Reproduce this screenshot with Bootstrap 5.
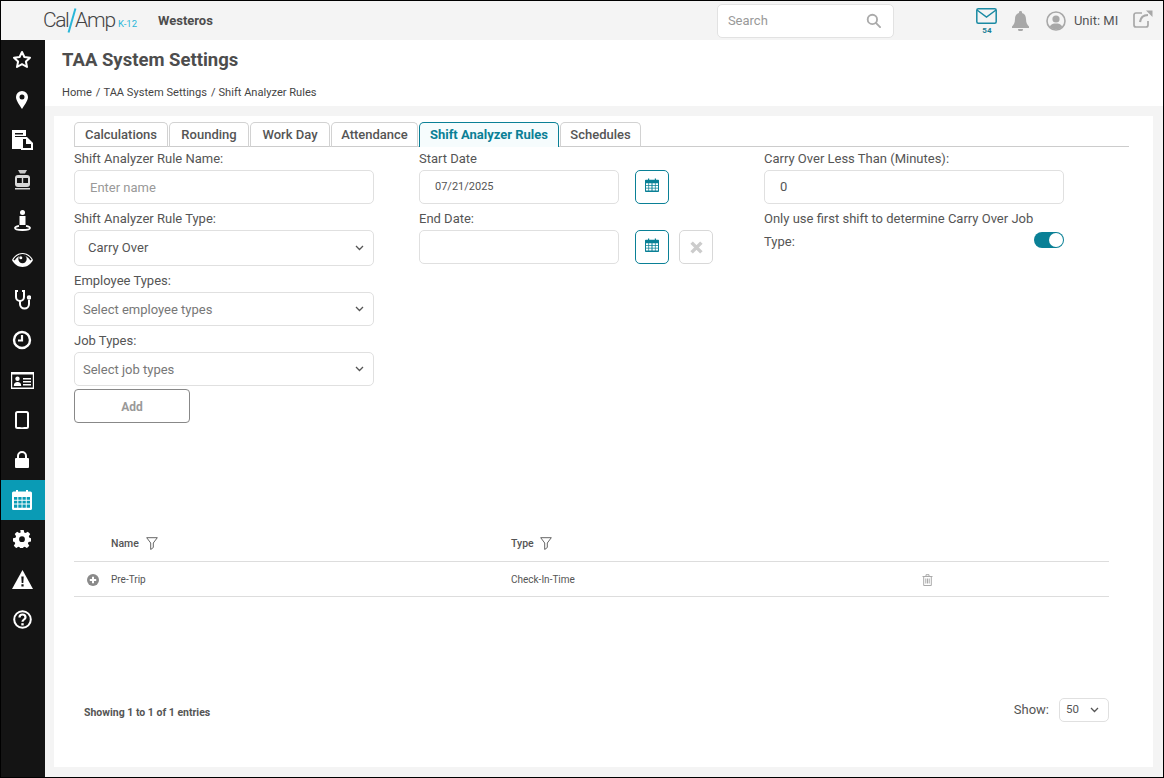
<!DOCTYPE html>
<html lang="en">
<head>
<meta charset="utf-8">
<title>TAA System Settings</title>
<link rel="stylesheet" href="https://cdn.jsdelivr.net/npm/bootstrap@5.3.0/dist/css/bootstrap.min.css">
<style>
html,body{height:100%}
body{font-family:Roboto,"Liberation Sans",sans-serif;color:#555;background:#f4f4f4;font-size:13px;overflow:hidden}
.shell{width:1164px;height:778px;border:1px solid #000;display:flex;flex-direction:column;overflow:hidden}
.topbar{height:39px;flex:none;background:#f4f4f4;display:flex;align-items:center;position:relative}
.logo{margin-left:42px;width:97px;height:36px;flex:none;display:flex;align-items:center;color:#444;font-size:21px;font-weight:300;letter-spacing:-1.100px;white-space:nowrap}
.logo .calpart{letter-spacing:-1.400px}
.logo .slash{width:1.500px;height:25px;background:#29b6d8;transform:rotate(16deg);margin:0 2px 0 3px}
.logo sub{font-size:9.500px;color:#29b6d8;position:static;margin:7px 0 0 3px;letter-spacing:0;font-weight:400;line-height:1}
.brandname{font-size:13px;font-weight:700;color:#4d4d4d;margin-left:18px}
.searchbox{margin-left:504px;width:177px;height:34px;background:#fff;border:1px solid #e2e2e2;border-radius:5px;display:flex;align-items:center;justify-content:space-between;padding:0 12px 0 10px;color:#999;font-size:13px;flex:none}
.tools{display:flex;align-items:center;flex:none}
.msgbox{margin-left:82px;width:22px;display:flex;flex-direction:column;align-items:center;margin-top:1px}
.msgcount{font-size:8px;font-weight:700;color:#1b7f96;line-height:9px;margin-top:2px}
.belltool{margin-left:13px}
.usertool{margin-left:16px}
.exttool{margin-left:15px;margin-bottom:3px}
.unit{font-size:13px;color:#555;margin-left:8px}
.mainrow{flex:1;display:flex;min-height:0}
.sidenav{width:44px;flex:none;background:#141414;display:flex;flex-direction:column}
.sideitem{height:40px;display:flex;align-items:center;justify-content:center;flex:none;padding-right:2px}
.sideitem.current{background:#0a9bb5}
.sideitem .liftup{margin-bottom:2px}
.rightside{flex:1;display:flex;flex-direction:column;min-width:0}
.pagehead{height:66px;background:#fff;flex:none;padding:0 0 0 17px}
.pagehead h1{font-size:18.500px;font-weight:700;color:#4d4d4d;margin:0;padding-top:9px;line-height:23px}
.crumbs{font-size:11.100px;color:#444;margin-top:14px;line-height:13px}
.crumbs span{margin:0 3px 0 4px}
.contentcard{background:#fff;margin:10px 10px 10px 9px;flex:1;padding:6px 24px 0 20px;display:flex;flex-direction:column;min-height:0}
.tabrow{display:flex;gap:1px;border-bottom:1px solid #ccc;height:25px;flex:none;list-style:none;padding:0;margin:0}
.tabrow li{border:1px solid #d2d2d2;border-bottom:0;border-radius:5px 5px 0 0;text-align:center;font-size:13px;font-weight:500;line-height:24px;color:#555;height:25px}
.tabrow li.picked{border-color:#0a8096;color:#0a8096;font-weight:700;background:#f6fcfd}
.wcalc{width:94px}.wround{width:80px}.wday{width:80px}.wattend{width:87px}.wrules{width:140px}.wsched{width:81px}
.formgrid{display:flex;gap:45px;flex:none;height:276px}
.formcol{width:300px;flex:none}
.fieldlabel{font-size:13px;color:#555;line-height:15px;display:block;margin:0}
.fieldlabel.first{margin-top:4px}
.mockinput{height:34px;border:1px solid #e0e0e0;border-radius:5px;margin-top:4px;display:flex;align-items:center;padding-left:15px;font-size:13px;color:#555;background:#fff}
.mockinput.ph{color:#999;padding-top:1px}
.mockinput.datetext{font-size:11px;padding-top:1px}
.mockselect{justify-content:space-between;padding:0 9px 0 13px}
.mockselect.tall{height:36px}
.mockselect.dim{color:#777;padding-left:8px;height:34px;padding-top:2px}
.mockselect.dim svg{margin-top:-2px}
.nextlabel{margin-top:7px}
.addbtn{width:116px;height:34px;border:1px solid #888;border-radius:4px;background:#fff;color:#999;font-weight:700;font-size:12px;margin-top:3px;padding:2px 0 0}
.dateline{display:flex;gap:16px;margin-top:4px}
.dateline .mockinput{width:200px;margin-top:0;flex:none}
.squarebtn{width:34px;height:34px;border:1px solid #0a8096;border-radius:5px;background:#fff;padding:0;display:flex;align-items:center;justify-content:center;flex:none}
.squarebtn .calglyph{margin-bottom:4px}
.squarebtn.off{border-color:#d8d8d8;margin-left:-6px}
.toggleline{display:flex;justify-content:space-between;align-items:center;margin-top:7px;height:18px}
.switchpill{width:30px;height:16px;border-radius:8px;background:#0a8096;position:relative;display:block;margin-top:-5px}
.switchpill::after{content:"";position:absolute;right:1px;top:1px;width:14px;height:14px;background:#fff;border-radius:50%}
.ruletable{width:1035px;margin:0;flex:none;font-size:10px;color:#555}
.ruletable th,.ruletable td{padding:0;border-bottom:1px solid #ddd;vertical-align:middle;background:transparent;color:#555}
.ruletable thead th{height:36px;font-weight:500;font-size:10.500px;padding-top:3px}
.ruletable thead svg{margin-bottom:2px}
.ruletable tbody td{height:35px;padding-top:2px}
.ruletable .c0{width:37px;padding-left:13px}
.ruletable .c1{width:400px}
.ruletable .c2{width:411px}
.gapblock{height:102px;flex:none}
.pagerrow{display:flex;justify-content:space-between;width:1035px;margin-top:101px;padding-left:10px;flex:none}
.showing{font-size:10.500px;font-weight:700;color:#555;margin-top:7px}
.showpick{display:flex;align-items:center;gap:10px;font-size:13px;color:#555}
.showpick .mockselect{margin:0;width:50px;height:24px;padding:0 9px 0 6px;font-size:11.500px}
</style>
</head>
<body>
<div class="shell">
  <div class="topbar">
    <div class="logo"><span class="calpart">Cal</span><i class="slash"></i>Amp<sub>K-12</sub></div>
    <div class="brandname">Westeros</div>
    <div class="searchbox">Search
      <svg width="15" height="15" viewBox="0 0 16 16" fill="none" stroke="#aaa" stroke-width="2"><circle cx="6.800" cy="6.800" r="5"/><path d="M10.500 10.500l4.500 4.500" stroke-linecap="round"/></svg>
    </div>
    <div class="tools">
      <div class="msgbox">
        <svg width="21" height="16" viewBox="0 0 21 16" fill="none" stroke="#1a8aa3" stroke-width="1.500"><rect x=".8" y=".8" width="19.400" height="14.400" rx="1.500"/><path d="M1 2l9.500 7L20 2"/></svg>
        <div class="msgcount">54</div>
      </div>
      <svg class="belltool" width="19" height="20" viewBox="0 0 19 20" fill="#a8a8a8"><path d="M9.500 0a1.500 1.500 0 0 1 1.400 2C13.600 2.600 15 5 15 8c0 4 1.500 6 3 7.500V17H1v-1.500C2.500 14 4 12 4 8c0-3 1.400-5.400 4.100-6A1.500 1.500 0 0 1 9.500 0zM7 18h5a2.500 2.500 0 0 1-5 0z"/></svg>
      <svg class="usertool" width="20" height="20" viewBox="0 0 20 20"><circle cx="10" cy="10" r="9" fill="none" stroke="#a8a8a8" stroke-width="1.600"/><circle cx="10" cy="8" r="3.600" fill="#a8a8a8"/><path d="M3.800 15.500C5 13 7.500 12.500 10 12.500s5 .5 6.200 3C14.500 17.500 12.500 18.300 10 18.300s-4.500-.8-6.200-2.800z" fill="#a8a8a8"/></svg>
      <span class="unit">Unit: MI</span>
      <svg class="exttool" width="20" height="18" viewBox="0 0 20 18" fill="none" stroke="#a8a8a8" stroke-width="1.700"><path d="M9 3H3a2 2 0 0 0-2 2v10a2 2 0 0 0 2 2h10a2 2 0 0 0 2-2v-4"/><path d="M7 12c.5-4 3-7 8-7" stroke-width="2.200"/><path d="M13 .5h6.500V7z" fill="#a8a8a8" stroke="none"/></svg>
    </div>
  </div>
  <div class="mainrow">
    <nav class="sidenav">
      <div class="sideitem"><svg class="liftup" width="20" height="19" viewBox="0 0 20 19" fill="none" stroke="#fff" stroke-width="2" stroke-linejoin="round"><path d="M10 2l2.400 5 5.600.7-4.100 3.800 1.100 5.500-5-2.800-5 2.800 1.100-5.500L2 7.700 7.600 7z"/></svg></div>
      <div class="sideitem"><svg width="12" height="18" viewBox="0 0 12 18"><path fill="#fff" fill-rule="evenodd" d="M6 0a6 6 0 0 1 6 6c0 3.500-4 9-6 12C4 15 0 9.500 0 6a6 6 0 0 1 6-6zm0 3.500a2.500 2.500 0 1 0 0 5 2.500 2.500 0 0 0 0-5z"/></svg></div>
      <div class="sideitem"><svg width="21" height="20" viewBox="0 0 21 20"><path fill="#fff" d="M0 0h14v6H3v1h6v12H0z"/><path fill="#141414" d="M3 3h8v1.500H3z"/><path fill="#fff" d="M9 7h6l6 6v7H9z"/><path fill="#141414" d="M11 9h3v5h5v4h-8z"/></svg></div>
      <div class="sideitem"><svg width="17" height="20" viewBox="0 0 17 20"><path fill="#c8c8c8" d="M4 0h9l-2 3.500H6z"/><rect x="1" y="5" width="15" height="12" rx="3" fill="#d8d8d8"/><rect x="3" y="8" width="11" height="5" fill="#141414"/><path fill="#d8d8d8" d="M1 18h15v1.500H1zM7.800 8h1.400v5H7.800z"/></svg></div>
      <div class="sideitem"><svg width="17" height="21" viewBox="0 0 17 21"><circle cx="8.500" cy="2.500" r="2.500" fill="#fff"/><path fill="#fff" d="M5.500 6h6v9h-6z"/><path fill="none" stroke="#fff" stroke-width="1.800" d="M5 15.800C2.500 16.300 1 17 1 18c0 1.300 3.300 2 7.500 2s7.500-.7 7.500-2c0-1-1.500-1.700-4-2.200"/></svg></div>
      <div class="sideitem"><svg width="21" height="14" viewBox="0 0 21 14"><path fill="#fff" d="M10.500 0C15 0 19 2.800 21 7c-2 4.200-6 7-10.500 7S2 11.200 0 7c2-4.200 6-7 10.500-7z"/><path fill="none" stroke="#141414" stroke-width="1.400" d="M2 7c2-3 5-5.200 8.500-5.200S17 4 19 7"/><circle cx="10.500" cy="6" r="4.200" fill="#141414"/><circle cx="8.800" cy="4.800" r="1.500" fill="#fff"/></svg></div>
      <div class="sideitem"><svg width="17" height="20" viewBox="0 0 17 20" fill="none" stroke="#fff" stroke-width="2"><path d="M4 1H2v6a4 4 0 0 0 8 0V1H8"/><path d="M6 11v3a4.500 4.500 0 0 0 9 0v-4"/><circle cx="15" cy="7.500" r="1.200"/></svg></div>
      <div class="sideitem"><svg width="20" height="20" viewBox="0 0 20 20" fill="none" stroke="#fff" stroke-width="2.400"><circle cx="10" cy="10" r="8"/><path d="M10 5v5.500H6" stroke-width="2.200"/></svg></div>
      <div class="sideitem"><svg width="23" height="17" viewBox="0 0 23 17"><rect width="23" height="17" fill="#fff"/><rect x="1.200" y="2.500" width="20.600" height="13" fill="#141414"/><circle cx="6.500" cy="6.800" r="2.200" fill="#fff"/><path fill="#fff" d="M2.800 14c0-3 1.500-4 3.700-4s3.700 1 3.700 4zM12 6h8v1.500h-8zM12 9h8v1.500h-8zM12 12h8v1.500h-8z"/></svg></div>
      <div class="sideitem"><svg width="14" height="18" viewBox="0 0 14 18"><rect x="1" y="1" width="12" height="16" rx="1.500" fill="none" stroke="#fff" stroke-width="2"/><rect x="5.500" y="15.300" width="3" height="1" fill="#141414"/></svg></div>
      <div class="sideitem"><svg class="liftup" width="14" height="17" viewBox="0 0 14 17"><path fill="none" stroke="#fff" stroke-width="2" d="M3 8V5a4 4 0 0 1 8 0v3"/><rect y="7" width="14" height="10" rx="1" fill="#fff"/></svg></div>
      <div class="sideitem current"><svg class="liftup" width="20" height="21" viewBox="0 0 20 21"><path fill="#fff" d="M1.500 2.500H4V1h2v1.500h8V1h2v1.500h2.500A1.500 1.500 0 0 1 20 4v15.500a1.500 1.500 0 0 1-1.500 1.500h-17A1.500 1.500 0 0 1 0 19.500V4a1.500 1.500 0 0 1 1.500-1.500z"/><path fill="#0a9bb5" d="M2 8h3.300v2.800H2zM6.300 8h3.300v2.800H6.300zM10.500 8h3.300v2.800h-3.300zM14.700 8H18v2.800h-3.300zM2 11.800h3.300v2.800H2zM6.300 11.800h3.300v2.800H6.300zM10.500 11.800h3.300v2.800h-3.300zM14.700 11.800H18v2.800h-3.300zM2 15.600h3.300v3.200H2zM6.300 15.600h3.300v3.200H6.300zM10.500 15.600h3.300v3.200h-3.300zM14.700 15.600H18v3.200h-3.300z"/></svg></div>
      <div class="sideitem"><svg class="liftup" width="18" height="18" viewBox="0 0 18 18"><path fill="#fff" fill-rule="evenodd" d="M7.300 0h3.400l.5 2.500 1.500.6 2.100-1.400 2.400 2.400-1.400 2.100.6 1.500L18 8.200v3.400l-2.500.5-.6 1.500 1.400 2.100-2.400 2.400-2.100-1.400-1.500.6-.5 2.100H7.300l-.5-2.100-1.500-.6-2.100 1.400-2.400-2.400 1.400-2.100-.6-1.500L0 11.600V8.200l2.500-.5.6-1.500-1.400-2.100 2.400-2.400 2.100 1.400 1.500-.6zM9 6.300a2.900 2.900 0 1 0 0 5.800 2.900 2.900 0 0 0 0-5.800z"/></svg></div>
      <div class="sideitem"><svg class="liftup" width="21" height="19" viewBox="0 0 21 19"><path fill="#fff" d="M10.500 0L21 19H0z"/><path fill="#141414" d="M9.300 6.500h2.400l-.4 6.500H9.700zM9.400 14.300h2.200v2.200H9.400z"/></svg></div>
      <div class="sideitem"><svg class="liftup" width="19" height="19" viewBox="0 0 19 19" fill="none" stroke="#fff" stroke-width="2"><circle cx="9.500" cy="9.500" r="8.300"/><path d="M6.500 7.500c0-1.800 1.300-3 3-3s3 1.100 3 2.700c0 2.300-3 2.300-3 4.600" stroke-width="2.200"/><path d="M8.300 13.200h2.400v2.200H8.300z" fill="#fff" stroke="none"/></svg></div>
    </nav>
    <div class="rightside">
      <header class="pagehead">
        <h1>TAA System Settings</h1>
        <div class="crumbs">Home<span>/</span>TAA System Settings<span>/</span>Shift Analyzer Rules</div>
      </header>
      <main class="contentcard">
        <ul class="tabrow">
          <li class="wcalc">Calculations</li><li class="wround">Rounding</li><li class="wday">Work Day</li><li class="wattend">Attendance</li><li class="picked wrules">Shift Analyzer Rules</li><li class="wsched">Schedules</li>
        </ul>
        <div class="formgrid">
          <div class="formcol">
            <label class="fieldlabel first">Shift Analyzer Rule Name:</label>
            <div class="mockinput ph">Enter name</div>
            <label class="fieldlabel nextlabel">Shift Analyzer Rule Type:</label>
            <div class="mockinput mockselect tall">Carry Over <svg width="9" height="6" viewBox="0 0 9 6" fill="none" stroke="#555" stroke-width="1.300"><path d="M1 1l3.500 3.500L8 1"/></svg></div>
            <label class="fieldlabel nextlabel">Employee Types:</label>
            <div class="mockinput mockselect dim">Select employee types <svg width="9" height="6" viewBox="0 0 9 6" fill="none" stroke="#555" stroke-width="1.300"><path d="M1 1l3.500 3.500L8 1"/></svg></div>
            <label class="fieldlabel nextlabel">Job Types:</label>
            <div class="mockinput mockselect dim">Select job types <svg width="9" height="6" viewBox="0 0 9 6" fill="none" stroke="#555" stroke-width="1.300"><path d="M1 1l3.500 3.500L8 1"/></svg></div>
            <button type="button" class="btn addbtn">Add</button>
          </div>
          <div class="formcol">
            <label class="fieldlabel first">Start Date</label>
            <div class="dateline">
              <div class="mockinput datetext">07/21/2025</div>
              <button type="button" class="btn squarebtn"><svg class="calglyph" width="14" height="14" viewBox="0 0 14 14"><path fill="#0a8096" d="M.8 1.800H3V.5h1.200v1.300h5.600V.5H11v1.300h2.200a.8.8 0 0 1 .8.8v10.600a.8.8 0 0 1-.8.8H.8a.8.8 0 0 1-.8-.8V2.600a.8.8 0 0 1 .8-.8z"/><path fill="#fff" d="M1 5.300h2.400v1.900H1zM4.100 5.300h2.400v1.900H4.100zM7.500 5.300h2.400v1.900H7.500zM10.600 5.300H13v1.900h-2.400zM1 7.900h2.400v1.900H1zM4.100 7.900h2.400v1.900H4.100zM7.500 7.900h2.400v1.900H7.500zM10.600 7.900H13v1.900h-2.400zM1 10.500h2.400v2.100H1zM4.100 10.500h2.400v2.100H4.100zM7.500 10.500h2.400v2.100H7.500zM10.600 10.500H13v2.100h-2.400z"/></svg></button>
            </div>
            <label class="fieldlabel nextlabel">End Date:</label>
            <div class="dateline">
              <div class="mockinput"></div>
              <button type="button" class="btn squarebtn"><svg class="calglyph" width="14" height="14" viewBox="0 0 14 14"><path fill="#0a8096" d="M.8 1.800H3V.5h1.200v1.300h5.600V.5H11v1.300h2.200a.8.8 0 0 1 .8.8v10.600a.8.8 0 0 1-.8.8H.8a.8.8 0 0 1-.8-.8V2.600a.8.8 0 0 1 .8-.8z"/><path fill="#fff" d="M1 5.300h2.400v1.900H1zM4.100 5.300h2.400v1.900H4.100zM7.500 5.300h2.400v1.900H7.500zM10.600 5.300H13v1.900h-2.400zM1 7.900h2.400v1.900H1zM4.100 7.900h2.400v1.900H4.100zM7.500 7.900h2.400v1.900H7.500zM10.600 7.900H13v1.900h-2.400zM1 10.500h2.400v2.100H1zM4.100 10.500h2.400v2.100H4.100zM7.500 10.500h2.400v2.100H7.500zM10.600 10.500H13v2.100h-2.400z"/></svg></button>
              <button type="button" class="btn squarebtn off"><svg width="13" height="13" viewBox="0 0 12 12" fill="none" stroke="#ccc" stroke-width="3.200"><path d="M1.500 1.500l9 9M10.500 1.500l-9 9"/></svg></button>
            </div>
          </div>
          <div class="formcol">
            <label class="fieldlabel first">Carry Over Less Than (Minutes):</label>
            <div class="mockinput">0</div>
            <label class="fieldlabel nextlabel">Only use first shift to determine Carry Over Job</label>
            <div class="toggleline"><span>Type:</span><span class="switchpill"></span></div>
          </div>
        </div>
        <div class="gapblock"></div>
        <table class="table ruletable">
          <thead>
            <tr>
              <th class="c0"></th>
              <th class="c1">Name <svg class="ms-1" width="12" height="13" viewBox="0 0 12 13" fill="none" stroke="#555" stroke-width=".9"><path d="M.7.700h10.600L7.300 6v4.500l-2.600 2V6z"/></svg></th>
              <th class="c2">Type <svg class="ms-1" width="12" height="13" viewBox="0 0 12 13" fill="none" stroke="#555" stroke-width=".9"><path d="M.7.700h10.600L7.300 6v4.500l-2.600 2V6z"/></svg></th>
              <th></th>
            </tr>
          </thead>
          <tbody>
            <tr>
              <td class="c0"><svg width="12" height="12" viewBox="0 0 12 12"><circle cx="6" cy="6" r="6" fill="#8a8a8a"/><path d="M5 2.800h2V5h2.200v2H7v2.200H5V7H2.800V5H5z" fill="#fff"/></svg></td>
              <td>Pre-Trip</td>
              <td>Check-In-Time</td>
              <td><svg width="11" height="12" viewBox="0 0 11 12" fill="none" stroke="#aaa"><path d="M.5 2.500h10M4 2.500V.7h3v1.800M1.700 2.500v9h7.600v-9M3.800 4.500v5M5.500 4.500v5M7.200 4.500v5"/></svg></td>
            </tr>
          </tbody>
        </table>
        <div class="pagerrow">
          <div class="showing">Showing 1 to 1 of 1 entries</div>
          <div class="showpick">Show:
            <div class="mockinput mockselect">50 <svg width="9" height="6" viewBox="0 0 9 6" fill="none" stroke="#555" stroke-width="1.300"><path d="M1 1l3.500 3.500L8 1"/></svg></div>
          </div>
        </div>
      </main>
    </div>
  </div>
</div>
</body>
</html>
